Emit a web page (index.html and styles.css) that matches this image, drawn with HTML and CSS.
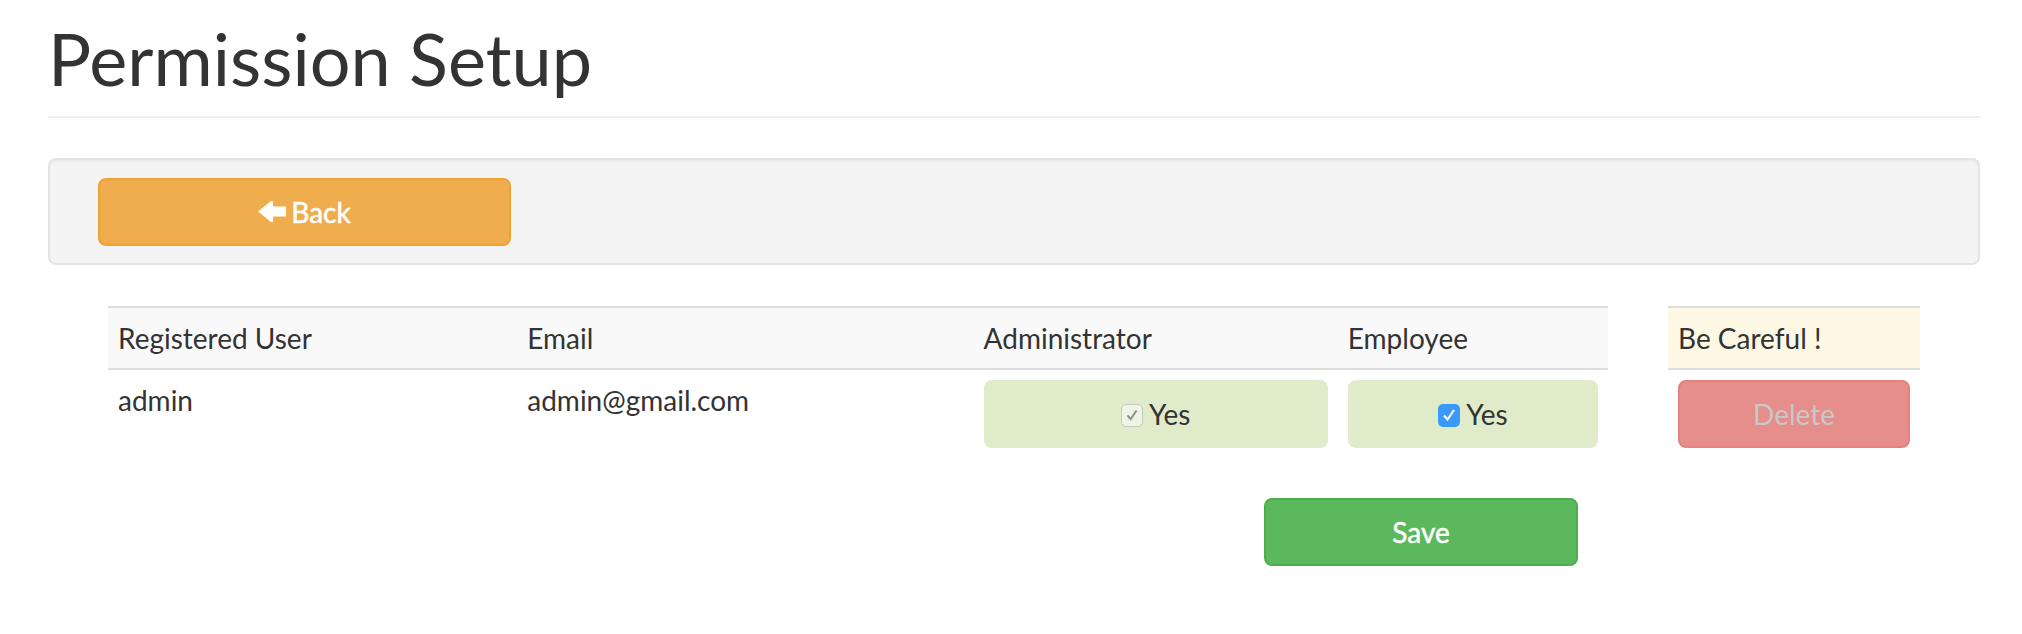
FILE: index.html
```html
<!DOCTYPE html>
<html lang="en">
<head>
<meta charset="utf-8">
<title>Permission Setup</title>
<link rel="stylesheet" href="styles.css">
</head>
<body>
<div class="container">
  <div class="page-header">
    <h1 class="title">Permission Setup</h1>
  </div>
  <div class="well">
    <button class="btn btn-back" type="button"><svg class="arrow" viewBox="0 0 28 21" width="28" height="21" aria-hidden="true"><path d="M0 10.5 L13 0 L15 0 L15 5.5 L28 5.5 L28 15.5 L15 15.5 L15 21 L13 21 Z" fill="#fff"/></svg>Back</button>
  </div>
  <div class="row">
    <div class="col-main">
      <table class="perm-table">
        <colgroup>
          <col class="c-user"><col class="c-email"><col class="c-admin"><col class="c-emp">
        </colgroup>
        <thead>
          <tr><th>Registered User</th><th>Email</th><th>Administrator</th><th>Employee</th></tr>
        </thead>
        <tbody>
          <tr>
            <td>admin</td>
            <td>admin@gmail.com</td>
            <td><div class="yes-box"><span class="cb cb-disabled"><svg viewBox="0 0 22 22" width="22" height="22"><path d="M6 11.5 L9.5 15.5 L16 6" fill="none" stroke="#8a9282" stroke-width="2.2"/></svg></span>Yes</div></td>
            <td><div class="yes-box"><span class="cb cb-checked"><svg viewBox="0 0 22 22" width="22" height="22"><path d="M6 11.5 L9.5 15.5 L16 6" fill="none" stroke="#fff" stroke-width="2.2"/></svg></span>Yes</div></td>
          </tr>
        </tbody>
      </table>
      <div class="actions">
        <button class="btn btn-save" type="button">Save</button>
      </div>
    </div>
    <div class="col-side">
      <table class="danger-table">
        <thead><tr><th>Be Careful !</th></tr></thead>
        <tbody><tr><td><button class="btn btn-delete" type="button" disabled>Delete</button></td></tr></tbody>
      </table>
    </div>
  </div>
</div>
</body>
</html>
```

FILE: styles.css
```css
* { box-sizing: border-box; }

html, body {
  margin: 0;
  padding: 0;
  background: #fff;
}

body {
  font-family: "Lato", "Open Sans", "Liberation Sans", sans-serif;
  font-size: 28px;
  line-height: 40px;
  color: #333;
}

.container {
  margin: 0 42px 0 48px;
  padding-top: 19px;
}

.page-header {
  padding-bottom: 18px;
  border-bottom: 2px solid #eee;
  margin-bottom: 40px;
}

.title {
  margin: 0;
  font-size: 72px;
  line-height: 79px;
  font-weight: 400;
  color: #333;
}

.well {
  background: #f4f4f4;
  border: 2px solid #e3e3e3;
  border-radius: 8px;
  box-shadow: inset 0 2px 2px rgba(0,0,0,0.04);
  padding: 18px 48px 17px 48px;
  margin-bottom: 41px;
}

.btn {
  font-family: inherit;
  font-size: 28px;
  line-height: 40px;
  border-radius: 8px;
  border: 2px solid transparent;
  padding: 12px 20px;
  height: 68px;
  cursor: pointer;
  display: inline-flex;
  align-items: center;
  justify-content: center;
}

.btn-back,
.btn-save {
  -webkit-text-stroke: 0.5px #fff;
}

.btn-back {
  width: 413px;
  background: #f0ad4e;
  border-color: #eea236;
  color: #fff;
}

.arrow {
  margin-right: 5px;
  margin-top: -2px;
}

.row {
  display: grid;
  grid-template-columns: 5fr 1fr;
  padding: 0 30px;
}

.col-main, .col-side {
  padding: 0 30px;
}

table {
  width: 100%;
  border-collapse: collapse;
  border-spacing: 0;
}

th, td {
  padding: 10px;
  text-align: left;
  vertical-align: top;
  font-weight: 400;
}

thead th {
  border-top: 2px solid #ddd;
  border-bottom: 2px solid #ddd;
}

.perm-table thead th { background: #f9f9f9; }

.c-user { width: 409px; }
.c-email { width: 456px; }
.c-admin { width: 364px; }
.c-emp { width: 270px; }

.yes-box {
  background: #dfebc9;
  border-radius: 8px;
  height: 68px;
  display: flex;
  align-items: center;
  justify-content: center;
}

.cb {
  width: 22px;
  height: 23px;
  border-radius: 5px;
  margin-right: 6px;
  margin-top: 2px;
  display: inline-flex;
  align-items: center;
  justify-content: center;
}

.cb-disabled {
  background: #eef4e6;
  border: 1px solid #c4cbbb;
}

.cb-checked {
  background: #3b99fc;
}

.danger-table thead th { background: #fcf8e3; }

.btn-delete {
  width: 100%;
  background: #e58e8b;
  border-color: #e3827f;
  color: #c9c7c7;
  cursor: not-allowed;
}

.actions {
  display: flex;
  justify-content: flex-end;
  padding-right: 30px;
  margin-top: 40px;
}

.btn-save {
  width: 314px;
  background: #5cb85c;
  border-color: #4cae4c;
  color: #fff;
}
```
